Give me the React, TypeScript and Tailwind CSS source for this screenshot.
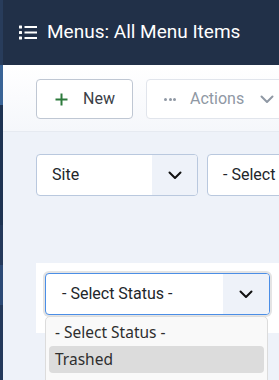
import React from 'react';

const Chevron = ({ className = '' }: { className?: string }) => (
  <svg width="14" height="9" viewBox="0 0 14 9" className={className} fill="none">
    <polyline points="1.5,1.5 7,7 12.5,1.5" stroke="currentColor" strokeWidth="2" strokeLinecap="round" strokeLinejoin="round" />
  </svg>
);

const ListIcon = () => (
  <svg width="18" height="15" viewBox="0 0 18 15" fill="white">
    <rect x="0" y="0.5" width="3" height="3" rx="0.5" />
    <rect x="0" y="6" width="3" height="3" rx="0.5" />
    <rect x="0" y="11.5" width="3" height="3" rx="0.5" />
    <rect x="5.5" y="1" width="12.5" height="2" />
    <rect x="5.5" y="6.5" width="12.5" height="2" />
    <rect x="5.5" y="12" width="12.5" height="2" />
  </svg>
);

export default function App() {
  return (
    <div className="w-[279px] h-[380px] overflow-hidden flex bg-[#eef2f9]" style={{ fontFamily: 'Roboto, "Liberation Sans", sans-serif' }}>
      {/* sidebar edge */}
      <div className="w-[3px] flex flex-col shrink-0">
        <div className="h-[65px] bg-[#283c5b]" />
        <div className="h-[40px] bg-[#3a6496]" />
        <div className="h-[120px] bg-[#1e3352]" />
        <div className="h-[40px] bg-[#24395b]" />
        <div className="h-[40px] bg-[#2c4a76]" />
        <div className="flex-1 bg-[#23395b]" />
      </div>

      <div className="flex-1 flex flex-col min-w-0">
        {/* Header */}
        <div className="h-[65px] shrink-0 bg-[#213048] flex items-center pl-[16px] gap-[10px]">
          <ListIcon />
          <span className="text-white text-[19px] whitespace-nowrap">Menus: All Menu Items</span>
        </div>

        {/* Toolbar */}
        <div className="h-[67px] shrink-0 bg-gradient-to-b from-white to-[#f5f7fb] border-b border-[#e6eaf1] pl-[33px] pt-[14px] flex gap-[13px]">
          <button className="w-[97px] h-[40px] shrink-0 border border-[#bfc7d3] rounded-[4px] bg-white flex items-center pl-[18px] gap-[15px] text-[#3b4047] text-[16px]">
            <svg width="13" height="13" viewBox="0 0 13 13">
              <path d="M6.5 0.5v12M0.5 6.5h12" stroke="#2d7a3c" strokeWidth="2" />
            </svg>
            New
          </button>
          <button className="w-[160px] h-[40px] shrink-0 border border-[#e1e5ec] rounded-[4px] bg-white flex items-center pl-[17px] text-[#8f98a4] text-[16px]">
            <span className="flex gap-[1.5px] mr-[14px]">
              <span className="w-[3px] h-[3px] rounded-full bg-[#8f98a4]" />
              <span className="w-[3px] h-[3px] rounded-full bg-[#8f98a4]" />
              <span className="w-[3px] h-[3px] rounded-full bg-[#8f98a4]" />
            </span>
            Actions
            <Chevron className="ml-[16px] text-[#8f98a4]" />
          </button>
        </div>

        {/* Filters */}
        <div className="pl-[33px] pt-[22px] flex gap-[9px]">
          <div className="w-[162px] h-[42px] shrink-0 border border-[#b9c8de] rounded-[4px] bg-white flex overflow-hidden">
            <span className="flex-1 flex items-center pl-[15px] text-[16px] text-[#22262a]">Site</span>
            <span className="w-[45px] bg-[#eef2f9] flex items-center justify-center text-[#111]">
              <Chevron />
            </span>
          </div>
          <div className="w-[160px] h-[42px] shrink-0 border border-[#b9c8de] rounded-[4px] bg-white flex items-center pl-[15px] text-[16px] text-[#22262a] whitespace-nowrap">
            - Select Language -
          </div>
        </div>

        {/* Status filter */}
        <div className="ml-[33px] mt-[67px] h-[70px] bg-white pl-[9px] pt-[10px] relative">
          <div className="w-[225px] h-[42px] border border-[#4b8ee6] rounded-[4px] bg-white flex overflow-hidden ring-2 ring-[#e4e4e4]">
            <span className="flex-1 flex items-center pl-[16px] text-[16px] text-[#22262a] whitespace-nowrap">- Select Status -</span>
            <span className="w-[46px] bg-[#eef2f9] flex items-center justify-center text-[#111]">
              <Chevron />
            </span>
          </div>

          <div
            className="absolute left-[9px] top-[53px] w-[223px] h-[80px] bg-[#f9f9f9] border border-[#dcdcdc] rounded-[5px] px-[3px] pt-[2px] text-[15.5px] text-[#2e2e2e]"
            style={{ fontFamily: '"Noto Sans", "Open Sans", sans-serif' }}
          >
            <div className="h-[27px] flex items-center pl-[6px]">- Select Status -</div>
            <div className="h-[27px] flex items-center pl-[6px] bg-[#dcdcdc] rounded-[4px]">Trashed</div>
            <div className="h-[27px] flex items-center pl-[6px]">- Unpublished -</div>
          </div>
        </div>
      </div>
    </div>
  );
}
